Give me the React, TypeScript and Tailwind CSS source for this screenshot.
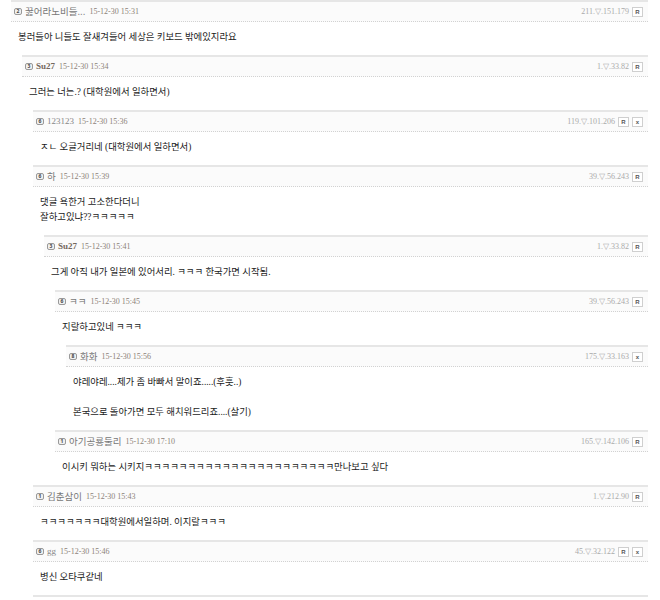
import React from 'react';

type Item = {
  level: number;
  badge: string;
  name: string;
  kr?: boolean;
  bold?: boolean;
  date: string;
  ip: string;
  buttons: string[];
  lines: string[];
};

const indent = ['ml-0', 'ml-[11px]', 'ml-[22px]', 'ml-[33px]', 'ml-[44px]', 'ml-[55px]'];

const items: Item[] = [
  { level: 0, badge: '2', name: '꿇어라노비들...', kr: true, date: '15-12-30 15:31', ip: '211.▽.151.179', buttons: ['R'], lines: ['봉러들아 니들도 잘새겨들어 세상은 키보드 밖에있지라요'] },
  { level: 1, badge: '3', name: 'Su27', bold: true, date: '15-12-30 15:34', ip: '1.▽.33.82', buttons: ['R'], lines: ['그러는 너는.? (대학원에서 일하면서)'] },
  { level: 2, badge: '6', name: '123123', date: '15-12-30 15:36', ip: '119.▽.101.206', buttons: ['R', 'x'], lines: ['ㅈㄴ 오글거리네 (대학원에서 일하면서)'] },
  { level: 2, badge: '6', name: '하', kr: true, date: '15-12-30 15:39', ip: '39.▽.56.243', buttons: ['R'], lines: ['댓글 욕한거 고소한다더니', '잘하고있냐??ㅋㅋㅋㅋㅋ'] },
  { level: 3, badge: '3', name: 'Su27', bold: true, date: '15-12-30 15:41', ip: '1.▽.33.82', buttons: ['R'], lines: ['그게 아직 내가 일본에 있어서리. ㅋㅋㅋ 한국가면 시작됨.'] },
  { level: 4, badge: '6', name: 'ㅋㅋ', kr: true, date: '15-12-30 15:45', ip: '39.▽.56.243', buttons: ['R'], lines: ['지랄하고있네 ㅋㅋㅋ'] },
  { level: 5, badge: '8', name: '화화', kr: true, date: '15-12-30 15:56', ip: '175.▽.33.163', buttons: ['x'], lines: ['야레야레....제가 좀 바빠서 말이죠.....(후훗..)', '\u00a0', '본국으로 돌아가면 모두 해치워드리죠....(살기)'] },
  { level: 4, badge: '1', name: '아기공룡둘리', kr: true, date: '15-12-30 17:10', ip: '165.▽.142.106', buttons: ['R'], lines: ['이시키 뭐하는 시키지ㅋㅋㅋㅋㅋㅋㅋㅋㅋㅋㅋㅋㅋㅋㅋㅋㅋㅋㅋㅋㅋㅋ만나보고 싶다'] },
  { level: 2, badge: '1', name: '김춘삼이', kr: true, date: '15-12-30 15:43', ip: '1.▽.212.90', buttons: ['R'], lines: ['ㅋㅋㅋㅋㅋㅋㅋ대학원에서일하며. 이지랄ㅋㅋㅋ'] },
  { level: 2, badge: '6', name: 'gg', date: '15-12-30 15:46', ip: '45.▽.32.122', buttons: ['R', 'x'], lines: ['병신 오타쿠같네'] },
];

const Comment = ({ item }: { item: Item }) => (
  <div className={`${indent[item.level]} border-t-2 border-[#e6e6e6]`}>
    {/* header */}
    <div className="flex h-[20px] items-center justify-between border-b border-dotted border-[#d2d2d2] bg-[#fbfbfb] pl-[3px] pr-[5px]">
      <div className="flex items-center">
        <span className="flex h-[7px] w-[8px] items-center justify-center rounded-[2px] border border-[#999] bg-[#f0f0f0] text-[5px] leading-none font-bold text-[#444]">
          {item.badge}
        </span>
        <span
          className={
            item.kr
              ? "ml-[3px] text-[9.5px] text-[#777] [font-family:'Noto_Sans_CJK_KR',sans-serif]"
              : `ml-[3px] text-[9px] [font-family:'Liberation_Serif',serif] ${item.bold ? 'font-bold text-[#74685c]' : 'text-[#888]'}`
          }
        >
          {item.name}
        </span>
        <span className="ml-[4px] text-[8px] text-[#8c8278] [font-family:'Liberation_Serif',serif]">{item.date}</span>
      </div>
      <div className="flex items-center gap-[3px]">
        <span className="text-[8px] text-[#aaa] [font-family:'Liberation_Serif',serif]">{item.ip}</span>
        {item.buttons.map((b) => (
          <span
            key={b}
            className="flex h-[10px] w-[11px] items-center justify-center border border-[#cfcfcf] bg-white text-[6px] leading-none font-bold text-[#555] [font-family:'Liberation_Sans',sans-serif]"
          >
            {b}
          </span>
        ))}
      </div>
    </div>
    {/* body */}
    <div className="pl-[7px] pt-[8px] pb-[10px] text-[9.4px] leading-[15px] text-[#1a1a1a] [font-family:'Liberation_Serif','Noto_Sans_CJK_KR',serif]">
      {item.lines.map((l, i) => (
        <div key={i}>{l}</div>
      ))}
    </div>
  </div>
);

export default function App() {
  return (
    <div className="h-[600px] overflow-hidden bg-white pl-[11px] pr-[12px]">
      {items.map((it, i) => (
        <Comment key={i} item={it} />
      ))}
      <div className={`${indent[2]} border-t-2 border-[#e6e6e6] h-[20px]`} />
    </div>
  );
}
